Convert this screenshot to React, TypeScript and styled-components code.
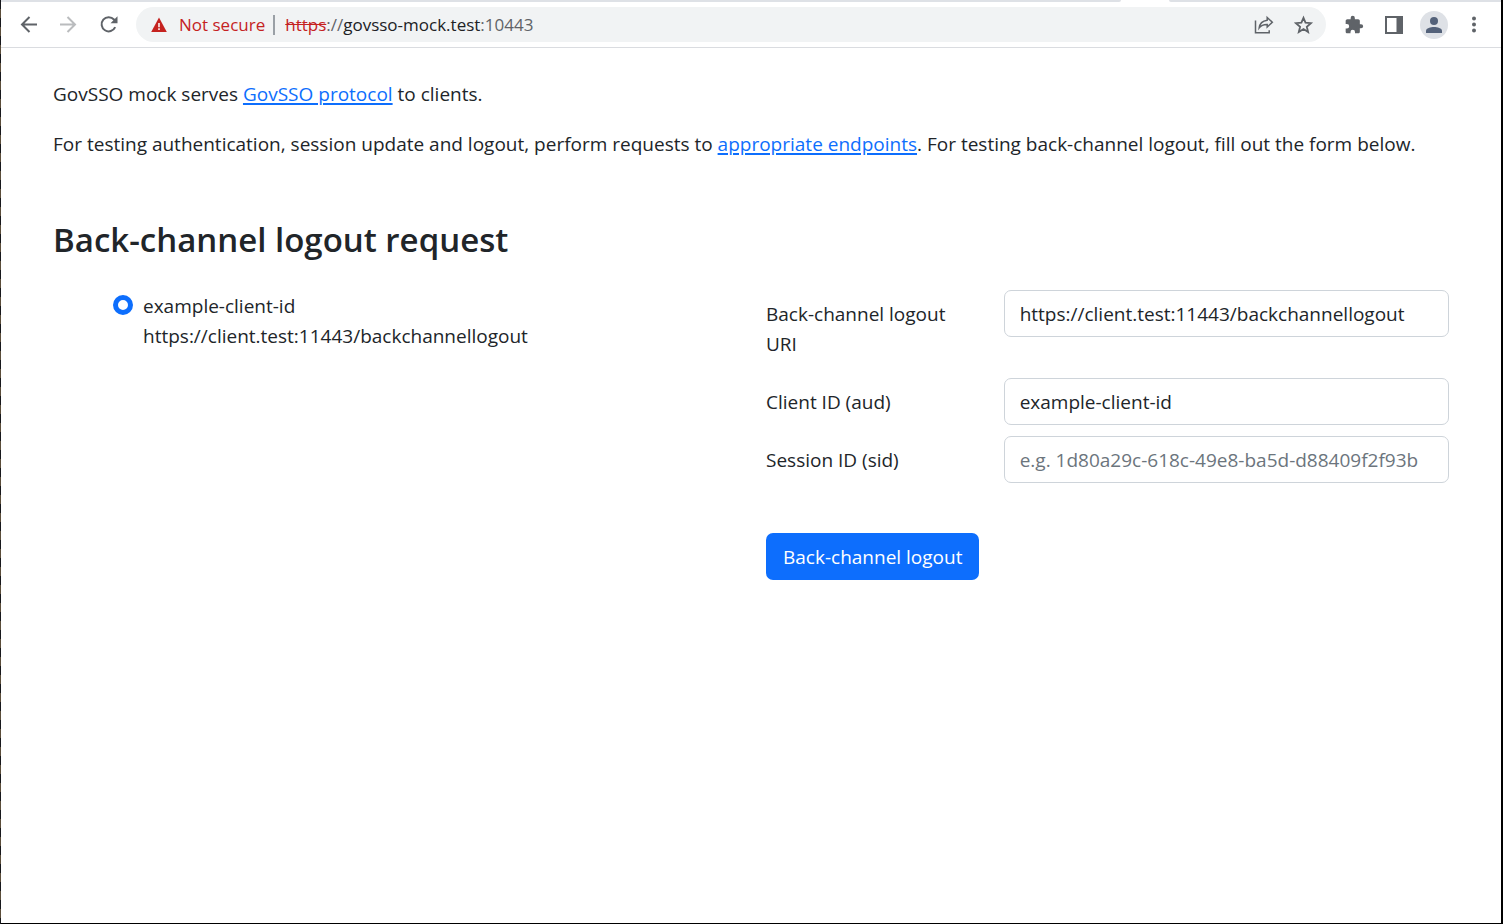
import React, { useState } from "react";
import styled, { createGlobalStyle } from "styled-components";

const GlobalStyle = createGlobalStyle`
  *, *::before, *::after { box-sizing: border-box; }
  body {
    margin: 0;
    background: #fff;
    color: #212529;
    font-family: "Segoe UI", "Open Sans", "Noto Sans", sans-serif;
    font-size: 19px;
    line-height: 30px;
  }
`;

const Window = styled.div`
  display: flex;
  flex-direction: column;
  min-height: 100vh;
  padding: 0 2px 1px 1px;
  background:
    repeating-linear-gradient(#17181c 0 9px, #5b4d3a 9px 18px) left / 1px 100% no-repeat,
    #000;
`;

const TabStrip = styled.div`
  display: flex;
  height: 2px;
  background: #fff;
`;

const TabEdge = styled.div<{ $wide?: boolean }>`
  flex: ${(p) => (p.$wide ? "1 1 0" : "0 0 332px")};
  background: #dee1e6;
  border-radius: ${(p) => (p.$wide ? "0 0 2px 0" : "0 0 0 2px")};
`;

const ActiveTab = styled.div`
  flex: 0 0 48px;
`;

const Toolbar = styled.header`
  display: flex;
  align-items: center;
  height: 46px;
  padding: 0 15px;
  background: #fff;
  border-bottom: 1px solid #dadce0;
`;

const IconButton = styled.button<{ $muted?: boolean }>`
  display: flex;
  align-items: center;
  justify-content: center;
  flex: none;
  width: 40px;
  height: 36px;
  padding: 0;
  border: 0;
  background: none;
  color: ${(p) => (p.$muted ? "#babcbe" : "#5f6368")};
`;

const NavButtons = styled.nav`
  display: flex;
  flex: none;
  margin-left: -7px;
`;

const ToolButtons = styled.div`
  display: flex;
  flex: none;
  margin: 0 -8px 0 8px;
`;

const AddressBar = styled.div`
  display: flex;
  align-items: center;
  flex: 1;
  min-width: 0;
  height: 35px;
  margin-left: 7px;
  padding: 0 2px 0 14px;
  border-radius: 18px;
  background: #f1f3f4;
  font-size: 17px;
  white-space: nowrap;
`;

const Security = styled.span`
  display: flex;
  align-items: center;
  gap: 11px;
  color: #c5221f;
`;

const Divider = styled.span`
  width: 2px;
  height: 20px;
  margin: 0 10px 0 8px;
  background: #9aa0a6;
`;

const Url = styled.span`
  flex: 1;
  color: #5f6368;
`;

const Scheme = styled.s`
  color: #c5221f;
`;

const Host = styled.span`
  color: #202124;
`;

const Avatar = styled.span`
  display: flex;
  align-items: center;
  justify-content: center;
  width: 28px;
  height: 28px;
  border-radius: 50%;
  background: #dee1e6;
  color: #54627a;
`;

const Page = styled.main`
  flex: 1;
  padding: 31px 52px 48px;
  background: #fff;
`;

const Paragraph = styled.p`
  margin: 0 0 20px;
`;

const Link = styled.a`
  color: #0d6efd;
  text-decoration: underline;
  text-decoration-thickness: 2px;
  text-underline-offset: 2px;
`;

const Title = styled.h1`
  margin: 60px 0 29px;
  font-size: 33px;
  font-weight: 600;
  line-height: 42px;
`;

const Columns = styled.form`
  display: grid;
  grid-template-columns: 1fr 1fr;
  gap: 30px;
`;

const Clients = styled.div`
  padding-left: 60px;
`;

const ClientOption = styled.label`
  display: flex;
  gap: 10px;
  padding-top: 1px;
  overflow-wrap: anywhere;
`;

const Radio = styled.input`
  appearance: none;
  flex: none;
  width: 20px;
  height: 20px;
  margin: 4px 0 0;
  border: 1px solid #bfbfbf;
  border-radius: 50%;
  background: #fff;

  &:checked {
    border: 5px solid #0d6efd;
  }
`;

const ClientText = styled.span`
  display: flex;
  flex-direction: column;
`;

const Fields = styled.div`
  display: flex;
  flex-direction: column;
  gap: 11px;
`;

const Field = styled.div`
  display: grid;
  grid-template-columns: repeat(3, 1fr);
  align-items: start;
  column-gap: 30px;
`;

const FieldLabel = styled.label`
  padding: 9px 0 8px;
`;

const TextInput = styled.input`
  grid-column: span 2;
  width: 100%;
  height: 47px;
  padding: 8px 15px;
  border: 1px solid #ced4da;
  border-radius: 7px;
  background: #fff;
  color: #212529;
  font: inherit;

  &::placeholder {
    color: #6c757d;
    opacity: 1;
  }
`;

const SubmitButton = styled.button`
  align-self: flex-start;
  height: 47px;
  margin-top: 39px;
  padding: 0 17px;
  border: 0;
  border-radius: 7px;
  background: #0d6efd;
  color: #fff;
  font: inherit;
`;

const stroke = { fill: "none", stroke: "currentColor", strokeWidth: 2 } as const;

const BackIcon = () => (
  <svg width="18" height="18" viewBox="0 0 18 18" {...stroke}>
    <path d="M17 8.500H2M9.500 1 2 8.500 9.500 16" />
  </svg>
);

const ForwardIcon = () => (
  <svg width="18" height="18" viewBox="0 0 18 18" {...stroke}>
    <path d="M0 8.500h15M7.500 1 15 8.500 7.500 16" />
  </svg>
);

const ReloadIcon = () => (
  <svg width="18" height="18" viewBox="0 0 18 18">
    <path d="M15.200 11.200A7.100 7.100 0 1 1 14 3.500l1.500 1.600" {...stroke} />
    <path d="M17.500.3v7h-7z" fill="currentColor" />
  </svg>
);

const WarningIcon = () => (
  <svg width="18" height="16" viewBox="0 0 18 16">
    <path d="M9 .6 16.800 15H1.200z" fill="#c5221f" />
    <path d="M9 6v4.200M9 11.300v1.700" stroke="#fff" strokeWidth="1.500" />
  </svg>
);

const ShareIcon = () => (
  <svg width="20" height="20" viewBox="0 0 20 20" fill="none" stroke="currentColor" strokeWidth="1.500">
    <path d="M1.500 5.500v12.300h13.700v-2.600" />
    <path d="M13.200 2.500l5.100 4.700-5.100 4.800V9.500c-3.400-.1-6 .8-8 3.400.5-4.300 3.200-7.100 8-7.700z" />
  </svg>
);

const StarIcon = () => (
  <svg width="20" height="20" viewBox="0 0 20 20" fill="none" stroke="currentColor" strokeWidth="1.800">
    <path d="M9.500 2.800l2 4.900 5.400.5-4.100 3.500 1.300 5.300-4.600-2.900-4.700 2.900 1.300-5.300L2 8.200l5.400-.5z" />
  </svg>
);

const PuzzleIcon = () => (
  <svg width="20" height="20" viewBox="0 0 24 24" fill="currentColor">
    <path d="M20.500 11H19V7c0-1.100-.9-2-2-2h-4V3.500a2.500 2.500 0 0 0-5 0V5H4c-1.100 0-2 .9-2 2v3.800h1.500a2.700 2.700 0 0 1 0 5.400H2V20c0 1.100.9 2 2 2h3.800v-1.500a2.700 2.700 0 0 1 5.400 0V22H17c1.100 0 2-.9 2-2v-4h1.500a2.500 2.500 0 0 0 0-5z" />
  </svg>
);

const SidePanelIcon = () => (
  <svg width="18" height="18" viewBox="0 0 18 18" fill="currentColor">
    <path fillRule="evenodd" d="M0 0h18v18H0zM2 2v14h9.500V2z" />
  </svg>
);

const PersonIcon = () => (
  <svg width="16" height="16" viewBox="0 0 16 16" fill="currentColor">
    <circle cx="8" cy="4" r="4" />
    <path d="M0 16v-2.200C0 11.200 4.600 10 8 10s8 1.200 8 3.800V16z" />
  </svg>
);

const MenuIcon = () => (
  <svg width="18" height="18" viewBox="0 0 18 18" fill="currentColor">
    <circle cx="9" cy="2.500" r="2" />
    <circle cx="9" cy="8.500" r="2" />
    <circle cx="9" cy="14.500" r="2" />
  </svg>
);

const LOGOUT_URI = "https://client.test:11443/backchannellogout";
const CLIENT_ID = "example-client-id";

export default function App() {
  const [uri, setUri] = useState(LOGOUT_URI);
  const [clientId, setClientId] = useState(CLIENT_ID);

  return (
    <Window>
      <GlobalStyle />
      <TabStrip>
        <TabEdge $wide />
        <ActiveTab />
        <TabEdge />
      </TabStrip>
      <Toolbar>
        <NavButtons aria-label="Navigation">
          <IconButton aria-label="Back"><BackIcon /></IconButton>
          <IconButton aria-label="Forward" $muted><ForwardIcon /></IconButton>
          <IconButton aria-label="Reload"><ReloadIcon /></IconButton>
        </NavButtons>
        <AddressBar>
          <Security><WarningIcon />Not secure</Security>
          <Divider />
          <Url>
            <Scheme>https</Scheme>://<Host>govsso-mock.test</Host>:10443
          </Url>
          <IconButton aria-label="Share"><ShareIcon /></IconButton>
          <IconButton aria-label="Bookmark"><StarIcon /></IconButton>
        </AddressBar>
        <ToolButtons>
          <IconButton aria-label="Extensions"><PuzzleIcon /></IconButton>
          <IconButton aria-label="Side panel"><SidePanelIcon /></IconButton>
          <IconButton aria-label="Profile"><Avatar><PersonIcon /></Avatar></IconButton>
          <IconButton aria-label="Menu"><MenuIcon /></IconButton>
        </ToolButtons>
      </Toolbar>
      <Page>
        <Paragraph>
          GovSSO mock serves <Link href="#protocol">GovSSO protocol</Link> to clients.
        </Paragraph>
        <Paragraph>
          For testing authentication, session update and logout, perform requests to{" "}
          <Link href="#endpoints">appropriate endpoints</Link>. For testing back-channel logout,
          fill out the form below.
        </Paragraph>
        <Title>Back-channel logout request</Title>
        <Columns onSubmit={(e) => e.preventDefault()}>
          <Clients>
            <ClientOption>
              <Radio type="radio" name="client" defaultChecked />
              <ClientText>
                <span>{CLIENT_ID}</span>
                <span>{LOGOUT_URI}</span>
              </ClientText>
            </ClientOption>
          </Clients>
          <Fields>
            <Field>
              <FieldLabel htmlFor="uri">Back-channel logout URI</FieldLabel>
              <TextInput id="uri" value={uri} onChange={(e) => setUri(e.target.value)} />
            </Field>
            <Field>
              <FieldLabel htmlFor="aud">Client ID (aud)</FieldLabel>
              <TextInput id="aud" value={clientId} onChange={(e) => setClientId(e.target.value)} />
            </Field>
            <Field>
              <FieldLabel htmlFor="sid">Session ID (sid)</FieldLabel>
              <TextInput id="sid" placeholder="e.g. 1d80a29c-618c-49e8-ba5d-d88409f2f93b" />
            </Field>
            <SubmitButton type="submit">Back-channel logout</SubmitButton>
          </Fields>
        </Columns>
      </Page>
    </Window>
  );
}
